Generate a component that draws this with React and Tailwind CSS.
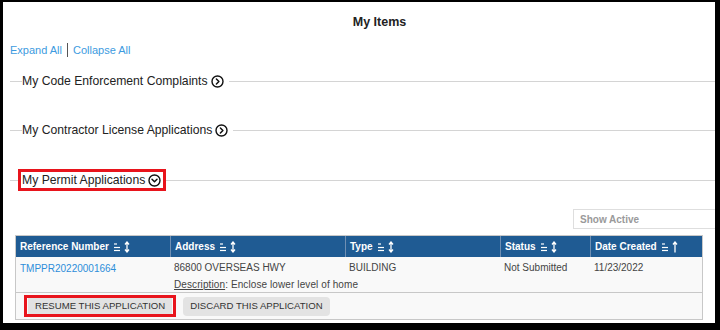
import React from "react";

function CircleChevron({ down }) {
  return (
    <svg width="13" height="13" viewBox="0 0 13 13" className="shrink-0">
      <circle cx="6.5" cy="6.5" r="5.5" fill="none" stroke="#111" strokeWidth="1.4" />
      {down ? (
        <path d="M4 5.3 L6.5 7.8 L9 5.3" fill="none" stroke="#111" strokeWidth="1.5" strokeLinecap="round" strokeLinejoin="round" />
      ) : (
        <path d="M5.4 4 L7.9 6.5 L5.4 9" fill="none" stroke="#111" strokeWidth="1.5" strokeLinecap="round" strokeLinejoin="round" />
      )}
    </svg>
  );
}

function SortIcon({ up }) {
  return (
    <span className="inline-flex items-center gap-[3px] ml-[4px]">
      <svg width="8" height="10" viewBox="0 0 8 10">
        <path d="M1 2 H4" stroke="#fff" strokeWidth="1.2" />
        <path d="M1 5.5 H7" stroke="#fff" strokeWidth="1.2" />
        <path d="M1 8.5 H7" stroke="#fff" strokeWidth="1.2" />
      </svg>
      <svg width="6" height="12" viewBox="0 0 6 12">
        {up ? (
          <path d="M3 11.5 V1.5 M1 3.5 L3 1 L5 3.5" fill="none" stroke="#fff" strokeWidth="1.3" />
        ) : (
          <path d="M3 1.5 V10.5 M1 3.5 L3 1 L5 3.5 M1 8.5 L3 11 L5 8.5" fill="none" stroke="#fff" strokeWidth="1.3" />
        )}
      </svg>
    </span>
  );
}

function Section({ title, down, boxed, mt }) {
  return (
    <div className={`flex items-center h-[22px] ${mt}`}>
      {boxed ? (
        <>
          <div className="w-[8px] ml-[7px] h-px bg-[#d4d4d4]" />
          <div className="flex items-center border-[3px] border-[#e8141c] h-[22px] pl-[1px] pr-[2px] bg-white">
            <span className="text-[12.2px] text-[#222] mr-[3px] leading-none">{title}</span>
            <CircleChevron down={down} />
          </div>
          <div className="flex-1 h-px bg-[#d4d4d4]" />
        </>
      ) : (
        <>
          <div className="w-[12px] ml-[7px] h-px bg-[#d4d4d4]" />
          <span className="text-[12.2px] text-[#222] mr-[3px] leading-none">{title}</span>
          <CircleChevron down={down} />
          <div className="flex-1 h-px bg-[#d4d4d4] ml-[5px]" />
        </>
      )}
    </div>
  );
}

export default function App() {
  const cols = [
    { label: "Reference Number", w: "w-[155px]" },
    { label: "Address", w: "w-[175px]" },
    { label: "Type", w: "w-[155px]" },
    { label: "Status", w: "w-[90px]" },
    { label: "Date Created", w: "flex-1", up: true },
  ];
  return (
    <div className="w-[720px] h-[330px] bg-black pt-[2px] pl-[3px] pr-[5px] pb-[7px]">
      <div className="bg-white h-full w-full overflow-hidden font-['Liberation_Sans',Arial,sans-serif]">
        <div className="h-[40px] flex items-center justify-center pl-[41px] pt-[1px]">
          <span className="text-[12.5px] font-bold text-[#222]">My Items</span>
        </div>
        <div className="h-[16px] flex items-center pl-[7px] text-[11px] text-[#3d9be0]">
          <span>Expand All</span>
          <span className="w-px h-[14px] bg-[#555] mx-[5px]" />
          <span>Collapse All</span>
        </div>
        <Section title="My Code Enforcement Complaints" mt="mt-[12px]" />
        <Section title="My Contractor License Applications" mt="mt-[27px]" />
        <Section title="My Permit Applications" down boxed mt="mt-[28px]" />
        <div className="mt-[18px] ml-[570px] w-[160px] h-[20px] border border-[#dedede] flex items-center pl-[6px]">
          <span className="text-[10px] font-bold text-[#9a9a9a]">Show Active</span>
        </div>
        <div className="mt-[6px] ml-[12px] w-[688px] border border-[#c8c8c8]">
          <div className="flex h-[21px] bg-[#1f5b93]">
            {cols.map((c, i) => (
              <div
                key={c.label}
                className={`${c.w} flex items-center pl-[4px] text-[10px] font-bold text-white ${i < cols.length - 1 ? "border-r border-[#6f8fb3]" : ""}`}
              >
                <span>{c.label}</span>
                <SortIcon up={c.up} />
              </div>
            ))}
          </div>
          <div className="flex h-[36px] bg-[#f9f9f9] border-b border-[#c8c8c8] text-[10px] text-[#444]">
            <div className="w-[155px] pl-[4px] pt-[4px] text-[#2d8ed9]">TMPPR20220001664</div>
            <div className="flex-1 flex flex-col">
              <div className="flex h-[18px] items-center pt-[2px]">
                <div className="w-[175px] pl-[3px]">86800 OVERSEAS HWY</div>
                <div className="w-[155px] pl-[3px]">BUILDING</div>
                <div className="w-[90px] pl-[3px]">Not Submitted</div>
                <div className="flex-1 pl-[3px]">11/23/2022</div>
              </div>
              <div className="h-[16px] flex items-center pl-[3px] pt-[2px] tracking-[0.1px]">
                <span className="underline">Description</span>
                <span>: Enclose lower level of home</span>
              </div>
            </div>
          </div>
          <div className="flex items-center h-[26px] bg-[#f9f9f9] pl-[8px]">
            <div className="border-[3px] border-[#e8141c] h-[22px] px-[1px] flex items-center">
              <div className="h-[16px] bg-[#e2e2e2] px-[7px] flex items-center text-[9.6px] text-[#333]">
                RESUME THIS APPLICATION
              </div>
            </div>
            <div className="ml-[7px] h-[19px] bg-[#e3e3e3] rounded-[4px] px-[7px] flex items-center text-[9.6px] text-[#333]">
              DISCARD THIS APPLICATION
            </div>
          </div>
        </div>
      </div>
    </div>
  );
}
